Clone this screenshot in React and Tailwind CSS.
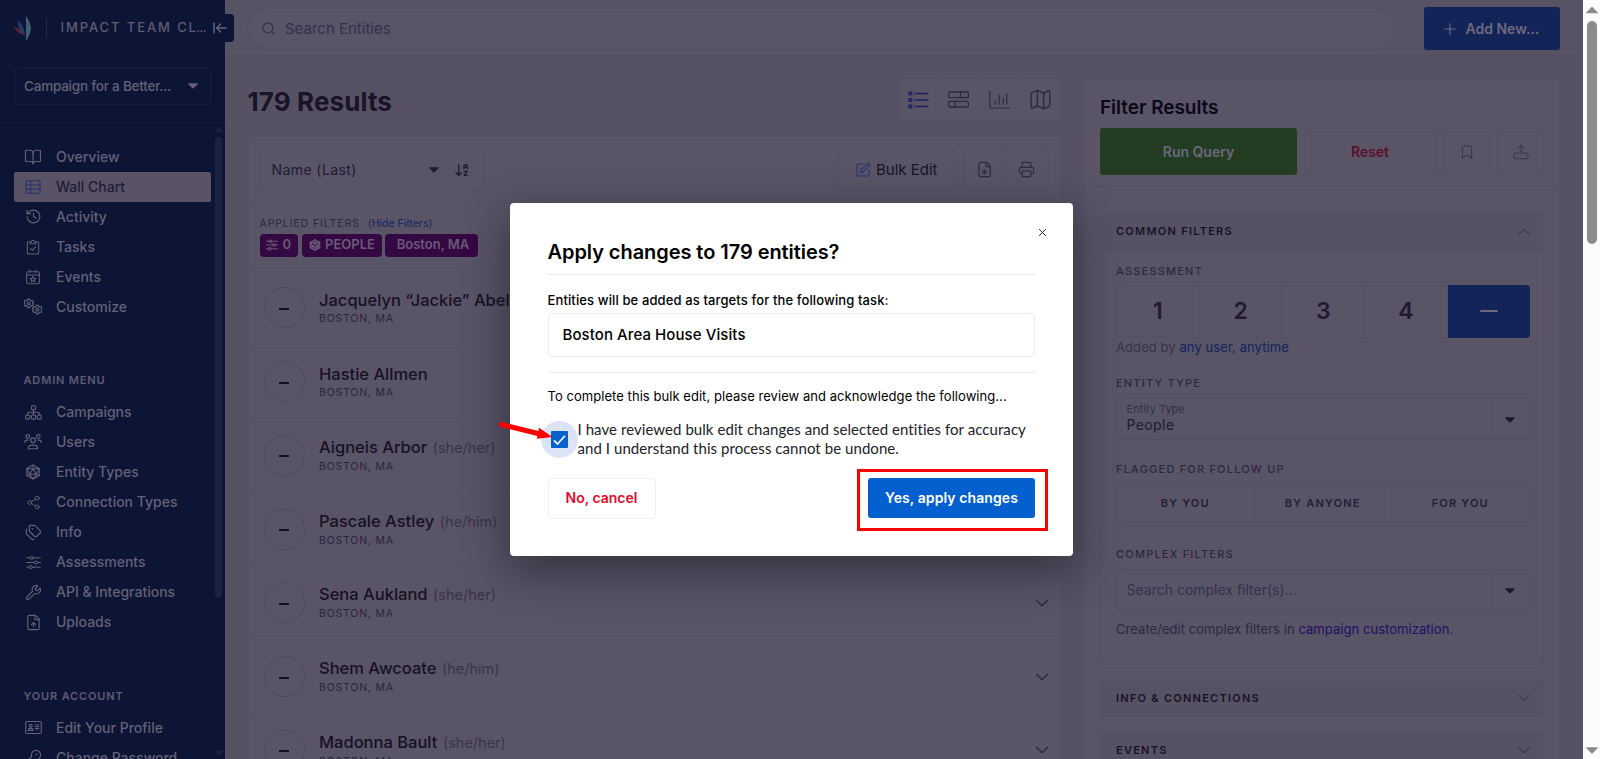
import {
  ArrowDownAZ, ArrowLeftToLine, BookOpen, Bookmark, ChevronDown, ChevronUp,
  FileDown, FileUp, History, KeyRound, Map, Plus, Printer, Search, Share2, SquarePen, Tags, Wrench, X,
} from 'lucide-react';

// Icons the package does not carry, all on a 24px grid
const Svg = ({ size = 16, strokeWidth = 1.8, className = '', children }) => (
  <svg
    width={size} height={size} viewBox="0 0 24 24" fill="none" stroke="currentColor"
    strokeWidth={strokeWidth} strokeLinecap="round" strokeLinejoin="round" className={className}
  >
    {children}
  </svg>
);

const TableIcon = (p) => (
  <Svg {...p}>
    <rect x="1.5" y="2.5" width="21" height="19" rx="2" />
    <path d="M1.5 9h21M1.5 15.2h21M8.5 2.5v19" />
  </Svg>
);

const ClipboardIcon = (p) => (
  <Svg {...p}>
    <path d="M8 4H5.5A2 2 0 0 0 3.5 6v14.5a2 2 0 0 0 2 2h13a2 2 0 0 0 2-2V6a2 2 0 0 0-2-2H16" />
    <path d="M8 7h8V4.2h-1.8a2.2 2.2 0 0 0-4.4 0H8zM8.3 14.3l2.6 2.6 4.9-5" />
  </Svg>
);

const CalendarStarIcon = (p) => (
  <Svg {...p}>
    <rect x="2.5" y="4" width="19" height="18" rx="2" />
    <path d="M2.5 9h19M7.5 1.5V5M16.5 1.5V5" />
    <path d="m12 11.2 1.3 2.6 2.9.4-2.1 2 .5 2.9-2.6-1.4-2.6 1.4.5-2.9-2.1-2 2.9-.4z" />
  </Svg>
);

const Gear = ({ x, y }) => (
  <g transform={`translate(${x} ${y})`}>
    <path d="M-1.3-5.6h2.6l.5 1.6 1.7.9 1.6-.5 1.3 2.2-1.2 1.3v.2l1.2 1.2-1.3 2.3-1.6-.4-1.7.9-.5 1.6h-2.6l-.5-1.6-1.7-.9-1.6.4-1.3-2.3 1.2-1.2v-.2l-1.2-1.3 1.3-2.2 1.6.5 1.7-.9z" />
    <circle r="1.7" />
  </g>
);

const GearsIcon = (p) => (
  <Svg {...p}>
    <Gear x="6.2" y="7" />
    <Gear x="17.8" y="15.5" />
  </Svg>
);

const SitemapIcon = (p) => (
  <Svg {...p}>
    <rect x="9.2" y="2.5" width="5.6" height="5.6" rx="1.4" />
    <rect x="1" y="15.5" width="5.8" height="5.8" rx="1.4" />
    <rect x="9.1" y="15.5" width="5.8" height="5.8" rx="1.4" />
    <rect x="17.2" y="15.5" width="5.8" height="5.8" rx="1.4" />
    <path d="M12 8.1v7.4M4 15.5v-2.7c0-.7.5-1.2 1.2-1.2h13.6c.7 0 1.2.5 1.2 1.2v2.7" />
  </Svg>
);

const UsersIcon = (p) => (
  <Svg {...p}>
    <circle cx="5" cy="4.5" r="2.4" />
    <circle cx="19" cy="4.5" r="2.4" />
    <circle cx="12" cy="9.6" r="3.1" />
    <path d="M5.6 21c0-3 2.4-4.9 5-4.9h2.8c2.6 0 5 1.9 5 4.9zM1 12.5c0-2 1.3-3.1 2.7-3.1h2M23 12.5c0-2-1.3-3.1-2.7-3.1h-2" />
  </Svg>
);

const D20Icon = (p) => (
  <Svg {...p}>
    <path d="m12 1.5 9.3 5.2v10.6L12 22.5l-9.3-5.2V6.7z" />
    <path d="m12 7.3 4.9 8.2H7.1zM12 1.5v5.8M2.7 6.7l9.3.6 9.3-.6-4.4 8.8 4.4 1.8M2.7 6.7l4.4 8.8-4.4 1.8M7.1 15.5l4.9 7 4.9-7" />
  </Svg>
);

const SlidersIcon = (p) => (
  <Svg {...p}>
    <path d="M1 4.5h5.5M11.5 4.5H23M1 12h12.5M18.5 12H23M1 19.5h4M10 19.5h13" />
    <circle cx="9" cy="4.5" r="2.5" />
    <circle cx="16" cy="12" r="2.5" />
    <circle cx="7.5" cy="19.5" r="2.5" />
  </Svg>
);

const IdCardIcon = (p) => (
  <Svg {...p}>
    <rect x="1" y="3.5" width="22" height="17" rx="2" />
    <circle cx="8" cy="9.5" r="2" />
    <path d="M4.5 16c0-1.8 1.2-2.8 2.5-2.8h2c1.3 0 2.5 1 2.5 2.8zM14.5 8.5h5M14.5 11h5M14.5 13.5h5" />
  </Svg>
);

const ListIcon = () => (
  <svg width="21" height="18" viewBox="0 0 21 18" fill="none" stroke="currentColor" strokeWidth="1.3">
    <path d="M6.5 2.5H20.5M6.5 9H20.5M6.5 15.5H20.5" />
    <path d="M1.2 1.2h2.4v2.4H1.2zM1.2 7.8h2.4v2.4H1.2zM1.2 14.3h2.4v2.4H1.2z" strokeWidth="1.5" />
  </svg>
);

const BlocksIcon = () => (
  <svg width="21" height="17" viewBox="0 0 21 17" fill="none" stroke="currentColor" strokeWidth="1.3">
    <rect x=".6" y="1" width="19.8" height="5.6" rx="1.2" />
    <rect x=".6" y="10.4" width="19.8" height="5.6" rx="1.2" />
    <path d="M12.5 1v5.6M7 10.4V16" />
  </svg>
);

const BarsIcon = () => (
  <svg width="21" height="19" viewBox="0 0 21 19" fill="none" stroke="currentColor" strokeWidth="1.2" strokeLinecap="round">
    <path d="M.8.8v15.5c0 1 .7 1.7 1.7 1.7h17.700M6.200 10.500v4M10.200 5v9.500M14.200 8v6.500M17.800 4v10.500" />
  </svg>
);

const UploadTrayIcon = () => (
  <Svg size={16} strokeWidth={1.5}>
    <path d="M12 16V1.500M7 6.300l5-4.800 5 4.800M9 13.500H3.500C2.300 13.500 1.500 14.300 1.500 15.500v4.500c0 1.200.8 2 2 2h17c1.200 0 2-.8 2-2v-4.500c0-1.200-.8-2-2-2H15M19 17.800h.1" />
  </Svg>
);

const Caret = ({ className = '' }) => (
  <svg width="10" height="6" viewBox="0 0 10 6" fill="currentColor" className={className}>
    <path d="M.8.3h8.4c.6 0 .8.5.4.9L5.600 5.200c-.4.400-.8.400-1.200 0L.4 1.200C0 .8.200.300.8.300z" />
  </svg>
);

const Logo = () => (
  <svg width="18" height="25" viewBox="0 0 18 25">
    <path d="M0 10.800c4.500 1 9 4.200 10.800 8.700C6 18.500 2 15.500 0 10.800z" fill="#542438" />
    <path d="M3.500 4.500C8 7.500 10.800 12 10.800 19 6.500 15.500 3.500 11 3.500 4.500z" fill="#29366c" />
    <path d="M12 0c2.600 3 4.400 7.500 5 12.500-.6 5-2.400 9-5 12.500z" fill="#3f5f70" />
  </svg>
);

const mainNav = [
  { label: 'Overview', icon: BookOpen, size: 18 },
  { label: 'Wall Chart', icon: TableIcon, size: 16, active: true },
  { label: 'Activity', icon: History, size: 17 },
  { label: 'Tasks', icon: ClipboardIcon, size: 16 },
  { label: 'Events', icon: CalendarStarIcon, size: 16 },
  { label: 'Customize', icon: GearsIcon, size: 18 },
];

const adminNav = [
  { label: 'Campaigns', icon: SitemapIcon, size: 17 },
  { label: 'Users', icon: UsersIcon, size: 18 },
  { label: 'Entity Types', icon: D20Icon, size: 16 },
  { label: 'Connection Types', icon: Share2, size: 15 },
  { label: 'Info', icon: Tags, size: 17 },
  { label: 'Assessments', icon: SlidersIcon, size: 15 },
  { label: 'API & Integrations', icon: Wrench, size: 17 },
  { label: 'Uploads', icon: FileUp, size: 17 },
];

const accountNav = [
  { label: 'Edit Your Profile', icon: IdCardIcon, size: 17 },
  { label: 'Change Password', icon: KeyRound, size: 17 },
];

const people = [
  { name: 'Jacquelyn “Jackie” Abel' },
  { name: 'Hastie Allmen' },
  { name: 'Aigneis Arbor', pronouns: '(she/her)' },
  { name: 'Pascale Astley', pronouns: '(he/him)' },
  { name: 'Sena Aukland', pronouns: '(she/her)' },
  { name: 'Shem Awcoate', pronouns: '(he/him)' },
  { name: 'Madonna Bault', pronouns: '(she/her)' },
];

const NavItem = ({ item }) => {
  const Icon = item.icon;
  return (
    <a className={`flex h-[30px] w-[197px] items-center rounded-[2px] ${item.active ? 'bg-[#595365] text-[#221c35]' : 'text-[#656077]'}`}>
      <span className={`ml-2 flex w-[22px] justify-center ${item.active ? 'text-[#27336f]' : ''}`}>
        <Icon size={item.size} strokeWidth={1.6} />
      </span>
      <span className="ml-3 text-sm font-[450] leading-none">{item.label}</span>
    </a>
  );
};

const NavHeading = ({ children }) => (
  <h2 className="ml-[9.5px] text-[11px] font-semibold leading-[14px] tracking-[0.85px] text-[#605b72]">{children}</h2>
);

const Sidebar = () => (
  <aside className="relative h-full w-[225px] shrink-0 bg-[#0c1536]">
    <div className="flex h-14 items-center pl-[14px]">
      <Logo />
      <div className="ml-[14px] h-5 w-px bg-[#242a48]" />
      <div className="ml-[13.5px] whitespace-nowrap text-[13px] font-medium tracking-[1.9px] text-[#605b72]">
        IMPACT TEAM C<span className="tracking-[0.4px]">L</span><span className="text-[12px] tracking-[-0.5px]">...</span>
      </div>
    </div>
    {/* Collapse tab hangs over the main column */}
    <div className="absolute left-[206px] top-[14px] flex h-7 w-7 items-center justify-center rounded-r text-[#67627a]">
      <div className="absolute inset-y-0 right-0 w-[9px] rounded-r bg-[#0c1536]" />
      <ArrowLeftToLine size={16} strokeWidth={2.2} className="relative" />
    </div>
    <div className="flex h-[66.5px] items-start border-b border-[#141b3c] px-[14px] pt-[11px]">
      <div className="flex h-[38px] w-full items-center justify-between rounded-[3px] border border-[#191f40] pl-[9px] pr-[12px] text-[#656077]">
        <span className="text-[13.5px] font-[450] tracking-[-0.22px]">Campaign for a Better...</span>
        <Caret />
      </div>
    </div>
    <div className="flex h-[636.5px] justify-between overflow-hidden pl-[14px] pr-[2.5px]">
      <nav className="pt-[19px]">
        {mainNav.map((item) => <NavItem key={item.label} item={item} />)}
        <div className="mt-[51.5px] mb-[10px]"><NavHeading>ADMIN MENU</NavHeading></div>
        {adminNav.map((item) => <NavItem key={item.label} item={item} />)}
        <div className="mt-[52px] mb-[9.5px]"><NavHeading>YOUR ACCOUNT</NavHeading></div>
        {accountNav.map((item) => <NavItem key={item.label} item={item} />)}
      </nav>
      <div className="flex flex-col items-center pt-[4px] text-[#1c2241]">
        <Caret className="h-[6px] w-[8px] rotate-180" />
        <div className="mt-[4px] h-[461px] w-[7px] rounded-full bg-[#1c2241]" />
        <Caret className="mt-[152px] h-[6px] w-[8px]" />
      </div>
    </div>
  </aside>
);

const TopBar = () => (
  <header className="flex h-14 shrink-0 items-center justify-between border-b border-[#524d60] bg-[#575264] pl-[22px] pr-[23px] pt-[2px]">
    <div className="flex h-[41px] w-[1150px] items-center rounded-full border border-[#555062] bg-[#595466] pl-[13px] text-[#353046]">
      <Search size={15} strokeWidth={1.7} />
      <span className="ml-[9px] text-[15px] leading-none text-[#36314a]">Search Entities</span>
    </div>
    <button className="flex h-[42.5px] w-[135.5px] items-center rounded-[3px] bg-[#132458] pl-[17px] text-[#6e6980]">
      <Plus size={18} strokeWidth={1.6} />
      <span className="ml-[6.5px] text-sm font-semibold">Add New...</span>
    </button>
  </header>
);

const Results = () => (
  <section className="w-[813px] shrink-0">
    <div className="flex h-20 items-start justify-between">
      <h1 className="pt-[28px] text-[26px] font-bold leading-[36px] tracking-[0.1px] text-[#1a1428]">179 Results</h1>
      <div className="mr-[-1px] mt-[22px] flex h-[43px] divide-x divide-[#555063] rounded border border-[#555063] bg-[#595466] text-[#2f2a42]">
        <div className="flex w-[40.5px] items-center justify-center text-[#1a2560]"><ListIcon /></div>
        <div className="flex w-[40.5px] items-center justify-center"><BlocksIcon /></div>
        <div className="flex w-[40.5px] items-center justify-center"><BarsIcon /></div>
        <div className="flex w-[40.5px] items-center justify-center"><Map size={25} strokeWidth={1.3} /></div>
      </div>
    </div>
    <div className="rounded border border-[#545062] bg-[#595466]">
      <div className="flex h-[65.5px] items-center px-[11px]">
        <div className="flex h-[43px] w-[225px] items-center rounded border border-[#545062] pl-[11px] text-[#211b33]">
          <span className="w-[157px] text-sm tracking-[0.42px]">Name (Last)</span>
          <Caret />
          <ArrowDownAZ size={16} strokeWidth={2.1} className="ml-[15.5px]" />
        </div>
        <div className="ml-auto flex h-[43px] w-[117px] items-center rounded border border-[#545062] pl-[16px]">
          <SquarePen size={16} strokeWidth={1.6} className="text-[#27336f]" />
          <span className="ml-[5.5px] text-[15px] text-[#1a1428]">Bulk Edit</span>
        </div>
        <div className="ml-2 flex h-[43px] w-[86px] divide-x divide-[#545062] rounded border border-[#545062] text-[#302b42]">
          <div className="flex flex-1 items-center justify-center"><FileDown size={17} strokeWidth={1.8} /></div>
          <div className="flex flex-1 items-center justify-center"><Printer size={17} strokeWidth={1.6} /></div>
        </div>
      </div>
      <div className="h-[68px] border-t border-[#545062] pl-[11px] pt-[12px]">
        <div className="flex items-center text-[10.5px] leading-[15px] text-[#2d2840]">
          <span className="tracking-[0.9px]">APPLIED FILTERS</span>
          <span className="ml-2">(<span className="font-medium text-[#1b2b66]">Hide Filters</span>)</span>
        </div>
        <div className="mt-[3px] flex gap-1 text-[13px] font-semibold text-[#6a5a7a]">
          <span className="flex h-[23px] w-[38.5px] items-center justify-center gap-1 rounded bg-[#340842]"><SlidersIcon size={12} strokeWidth={2.3} />0</span>
          <span className="flex h-[23px] w-[80px] items-center justify-center gap-1 rounded bg-[#340842]"><D20Icon size={12} strokeWidth={2.6} />PEOPLE</span>
          <span className="-ml-px flex h-[23px] w-[93px] items-center justify-center rounded bg-[#340842] pl-[3px]">Boston, MA</span>
        </div>
      </div>
      {people.map((person) => (
        <div key={person.name} className="flex h-[73.75px] items-center border-t border-[#545062] pl-[15px] pr-[7px]">
          <div className="flex size-[41px] items-center justify-center rounded-full border border-[#504b5e]">
            <div className="h-[2px] w-[10.5px] translate-y-px bg-[#151020]" />
          </div>
          <div className="ml-[14.5px]">
            <div className="flex items-baseline leading-[20px]">
              <span className="text-[16.5px] font-medium text-[#171124]">{person.name}</span>
              <span className="ml-[5.5px] text-[14.5px] text-[#3a354a]">{person.pronouns}</span>
            </div>
            <div className="mt-[2px] text-[10.5px] leading-[14px] tracking-[0.8px] text-[#2b263d]">BOSTON, MA</div>
          </div>
          <ChevronDown size={22} strokeWidth={1.2} className="ml-auto text-[#2b263d]" />
        </div>
      ))}
    </div>
  </section>
);

const Label = ({ children }) => (
  <div className="text-[11px] font-medium leading-[14px] tracking-[1.2px] text-[#2d2840]">{children}</div>
);

const Collapsed = ({ title }) => (
  <div className="mx-[15px] mt-[14.5px] flex h-[37.5px] items-center justify-between rounded border border-[#545062] bg-[#575263] pl-[15px] pr-[8px]">
    <span className="text-[11px] font-semibold tracking-[1.25px] text-[#191326]">{title}</span>
    <ChevronDown size={22} strokeWidth={1.1} className="text-[#383349]" />
  </div>
);

const Combo = ({ children }) => (
  <div className="flex h-[43px] rounded border border-[#534e61]">
    <div className="flex flex-1 flex-col justify-center border-r border-[#545062] pl-[9.5px]">{children}</div>
    <div className="flex w-[37px] items-center justify-center pt-[2px] text-[#1d1830]"><Caret /></div>
  </div>
);

const FilterPanel = () => (
  <section className="mt-[23px] w-[476px] shrink-0 border border-[#565164] bg-[#595466]">
    <div className="border-b border-[#545062] px-[15px] pb-[11px] pt-[16px]">
      <h2 className="text-[19px] font-semibold leading-[24px] tracking-[-0.05px] text-[#0c0718]">Filter Results</h2>
      <div className="mt-[8px] flex h-[47px] justify-between text-sm font-semibold">
        <button className="w-[197px] rounded-[3px] bg-[#243c22] text-[#69687a]">Run Query</button>
        <button className="w-[132px] rounded border border-[#545062] text-[#5b0f2e]">Reset</button>
        <button className="flex w-[47px] items-center justify-center rounded border border-[#545062] text-[#38334a]"><Bookmark size={16} strokeWidth={1.5} /></button>
        <button className="flex w-[47px] items-center justify-center rounded border border-[#545062] text-[#38334a]"><UploadTrayIcon /></button>
      </div>
    </div>
    <div className="mx-[15px] mt-[26px] h-[452px] rounded border border-[#545062]">
      <div className="flex h-[36px] items-center justify-between border-b border-[#545062] bg-[#575263] pl-[15px] pr-[8px]">
        <span className="text-[11px] font-semibold tracking-[1.25px] text-[#191326]">COMMON FILTERS</span>
        <ChevronUp size={22} strokeWidth={1.1} className="text-[#383349]" />
      </div>
      <div className="pl-[15px] pr-[13.5px] pt-[14px]">
        <Label>ASSESSMENT</Label>
        <div className="mt-[7px] flex h-[52.5px] divide-x divide-[#545062] rounded border border-[#545062] text-[23px] font-semibold text-[#201a32]">
          {[1, 2, 3, 4].map((n) => <div key={n} className="flex flex-1 items-center justify-center">{n}</div>)}
          <div className="-my-px -mr-px flex flex-1 items-center justify-center rounded-r border-none bg-[#132458]"><div className="h-[2px] w-[18px] rounded bg-[#6e6980]" /></div>
        </div>
        <p className="text-[13px] leading-[18px] tracking-[0.08px] text-[#393449]">
          Added by <span className="text-[#132460]">any user, anytime</span>
        </p>
        <div className="mt-[20.5px] mb-[7px]"><Label>ENTITY TYPE</Label></div>
        <Combo>
          <span className="text-[11px] leading-[14px] text-[#353046]">Entity Type</span>
          <span className="pb-[2px] text-sm leading-[17px] tracking-[0.4px] text-[#211b33]">People</span>
        </Combo>
        <div className="mt-[22px] mb-[7px]"><Label>FLAGGED FOR FOLLOW UP</Label></div>
        <div className="flex h-[39.5px] divide-x divide-[#545062] rounded border border-[#534e61] text-[11px] font-semibold tracking-[1.2px] text-[#242038]">
          {['BY YOU', 'BY ANYONE', 'FOR YOU'].map((t) => <div key={t} className="flex flex-1 items-center justify-center">{t}</div>)}
        </div>
        <div className="mt-[24px] mb-[8px]"><Label>COMPLEX FILTERS</Label></div>
        <Combo><span className="text-sm text-[#353150]">Search complex filter(s)...</span></Combo>
        <p className="mt-[8px] whitespace-nowrap text-[13px] leading-[18px] tracking-[0.05px] text-[#2d2840]">
          Create/edit complex filters in <span className="text-[#1f0f68]">campaign customization</span>.
        </p>
      </div>
    </div>
    <Collapsed title="INFO & CONNECTIONS" />
    <Collapsed title="EVENTS" />
  </section>
);

const ConfirmModal = () => (
  <div className="relative h-[353px] w-[562.5px] rounded bg-white px-[37.5px] pt-[35px] text-black shadow-[0_14px_45px_2px_rgba(12,8,20,0.45)]">
    <button className="absolute right-[23.5px] top-[23px]"><X size={13} strokeWidth={1.5} /></button>
    <h2 className="border-b border-[#ececf0] pb-[8px] text-[20px] font-semibold leading-[28px] tracking-[-0.06px]">Apply changes to 179 entities?</h2>
    <p className="mt-[16px] text-[13px] font-medium leading-[18px] tracking-[0.12px]">Entities will be added as targets for the following task:</p>
    <div className="mt-[4px] flex h-[44px] items-center rounded border border-[#ededf1] pl-[14px] pt-px text-[15px] font-medium tracking-[0.08px]">Boston Area House Visits</div>
    <p className="mt-[15px] border-t border-[#ececf0] pt-[14px] text-[13px] leading-[18px] tracking-[0.05px]">To complete this bulk edit, please review and acknowledge the following...</p>
    <div className="mt-[16px] flex h-[37px] items-center">
      <div className="-ml-[7px] flex size-[37px] shrink-0 items-center justify-center rounded-full bg-[#dbe4f7]">
        <div className="flex size-[17px] items-center justify-center rounded-[1px] bg-[#0460cf]">
          <svg width="13" height="12" viewBox="0 0 13 12" fill="none" stroke="white" strokeWidth="1.7"><path d="M1 6.300 4.500 10 12 1.800" /></svg>
        </div>
      </div>
      <p className="-mt-[2px] whitespace-nowrap font-['Lato',sans-serif] text-[15px] leading-[18.5px] tracking-[0.06px] text-[#222226]">
        I have reviewed bulk edit changes and selected entities for accuracy<br />
        and I understand this process cannot be undone.
      </p>
    </div>
    <div className="mt-[19.5px] flex justify-between text-sm font-semibold">
      <button className="h-[41px] w-[108px] rounded border border-[#efeff2] text-[#e20a2e]">No, cancel</button>
      <button className="h-[40px] w-[167px] rounded-[3px] bg-[#0460cf] tracking-[0.09px] text-white">Yes, apply changes</button>
    </div>
    {/* Callouts */}
    <div className="absolute left-[346.5px] top-[266px] h-[62px] w-[191px] border-[3px] border-[#fe0000]" />
    <svg className="absolute -left-[14px] top-[216px]" width="60" height="24" viewBox="0 0 60 24">
      <path d="M5.500 5.500 44 15" stroke="#fe0000" strokeWidth="5" strokeLinecap="round" />
      <path d="M43 8.800 56.500 18 40.800 19.800z" fill="#fe0000" />
    </svg>
  </div>
);

const PageScrollbar = () => (
  <div className="flex h-full w-[17.5px] shrink-0 flex-col items-center border-l border-white bg-[#fcfcfc] pt-[6px] text-[#8b8b8b]">
    <Caret className="h-[8px] w-[12px] rotate-180" />
    <div className="mt-[7px] h-[223px] w-[10px] rounded-full bg-[#8b8b8b]" />
    <Caret className="mb-[4px] mt-auto h-[9px] w-[12px]" />
  </div>
);

export default function App() {
  return (
    <div className="flex h-[759px] w-[1600px] overflow-hidden font-['Inter',sans-serif]">
      <div className="relative flex h-full min-w-0 flex-1 overflow-hidden bg-[#565163]">
        <Sidebar />
        <div className="flex min-w-0 flex-1 flex-col">
          <TopBar />
          <main className="flex min-h-0 flex-1 items-start gap-[23.5px] overflow-hidden pl-[22.5px]">
            <Results />
            <FilterPanel />
          </main>
        </div>
        <div className="absolute inset-0 flex items-center justify-center">
          <ConfirmModal />
        </div>
      </div>
      <PageScrollbar />
    </div>
  );
}
